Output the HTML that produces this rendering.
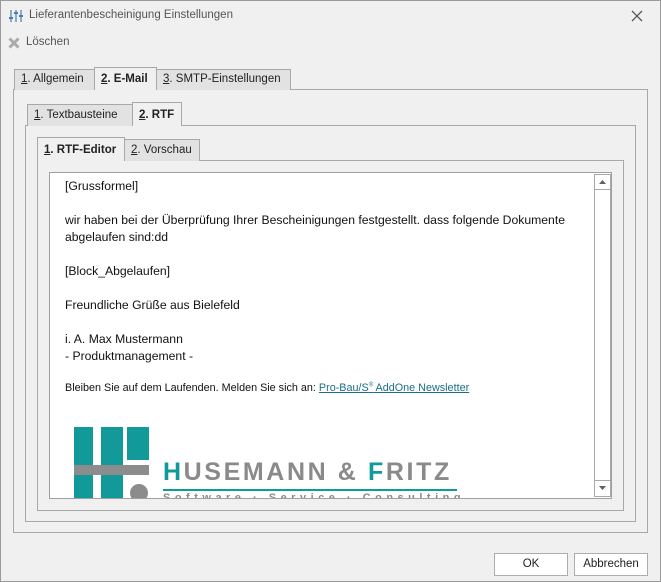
<!DOCTYPE html>
<html><head><meta charset="utf-8"><style>
*{box-sizing:border-box;margin:0;padding:0}
body{width:661px;height:582px;background:#f0f0f0;font-family:"Liberation Sans",sans-serif;font-size:11.5px;color:#222;position:relative;overflow:hidden}
.win{position:absolute;left:0;top:0;width:661px;height:582px;border:1px solid #9a9a9a}
.a{position:absolute}
.tab{position:absolute;border:1px solid #a8a8a8;border-bottom:none;background:#e2e2e2;padding-left:6px;line-height:19px}
.tab.act{background:#f0f0f0;font-weight:bold;z-index:2}
.pan{position:absolute;border:1px solid #a8a8a8;background:#f0f0f0}
u{text-decoration:underline}
.ed{position:absolute;left:49px;top:172px;width:563px;height:327px;border:1px solid #a0a0a0;background:#fff;overflow:hidden}
.txt{position:absolute;left:15px;font-size:12.2px;color:#111;white-space:nowrap}
.btn{position:absolute;border:1px solid #adadad;background:#fff;text-align:center;line-height:21px;font-size:11.5px}
</style></head><body>
<div class="win"></div>
<svg class="a" style="left:9px;top:9px" width="14" height="14" viewBox="0 0 14 14"><g stroke="#4a7bb7" stroke-width="1.2"><line x1="2" y1="1" x2="2" y2="13"/><line x1="7" y1="1" x2="7" y2="13"/><line x1="12" y1="1" x2="12" y2="13"/></g><g fill="#4a7bb7"><rect x="0" y="8" width="4" height="2"/><rect x="5" y="3" width="4" height="2"/><rect x="10" y="6" width="4" height="2"/></g></svg>
<div class="a" style="left:29px;top:9px;color:#555">Lieferantenbescheinigung Einstellungen</div>
<svg class="a" style="left:631px;top:10px" width="12" height="12"><path d="M1 1L11 11M11 1L1 11" stroke="#555" stroke-width="1.3"/></svg>
<svg class="a" style="left:8px;top:37px" width="12" height="12"><path d="M1.5 1.5L10.5 10.5M10.5 1.5L1.5 10.5" stroke="#aaa" stroke-width="3"/></svg>
<div class="a" style="left:26px;top:36px;color:#555">Löschen</div>

<div class="pan" style="left:13px;top:89px;width:635px;height:444px"></div>
<div class="tab" style="left:14px;top:69px;width:81px;height:21px"><u>1</u>. Allgemein</div>
<div class="tab act" style="left:94px;top:67px;width:63px;height:23px;line-height:22px"><u>2</u>. E-Mail</div>
<div class="tab" style="left:156px;top:69px;width:135px;height:21px"><u>3</u>. SMTP-Einstellungen</div>

<div class="pan" style="left:25px;top:125px;width:611px;height:397px"></div>
<div class="tab" style="left:27px;top:104px;width:106px;height:22px;line-height:21px"><u>1</u>. Textbausteine</div>
<div class="tab act" style="left:132px;top:102px;width:50px;height:24px;line-height:24px"><u>2</u>. RTF</div>

<div class="pan" style="left:37px;top:160px;width:587px;height:351px"></div>
<div class="tab act" style="left:37px;top:137px;width:88px;height:24px;line-height:24px"><u>1</u>. RTF-Editor</div>
<div class="tab" style="left:124px;top:139px;width:76px;height:22px;line-height:21px"><u>2</u>. Vorschau</div>

<div class="ed">
<div class="txt" style="top:6px">[Grussformel]</div>
<div class="txt" style="top:40px">wir haben bei der Überprüfung Ihrer Bescheinigungen festgestellt. dass folgende Dokumente</div>
<div class="txt" style="top:57px">abgelaufen sind:dd</div>
<div class="txt" style="top:91px">[Block_Abgelaufen]</div>
<div class="txt" style="top:125px">Freundliche Grüße aus Bielefeld</div>
<div class="txt" style="top:159px">i. A. Max Mustermann</div>
<div class="txt" style="top:176px">- Produktmanagement -</div>
<div class="txt" style="top:209px;font-size:10.8px">Bleiben Sie auf dem Laufenden. Melden Sie sich an: <span style="color:#1a6e8a;text-decoration:underline">Pro-Bau/S<sup style="font-size:6px">®</sup> AddOne Newsletter</span></div>
<div class="a" style="left:24px;top:254px;width:19px;height:80px;background:#12999a"></div>
<div class="a" style="left:51px;top:254px;width:22px;height:80px;background:#12999a"></div>
<div class="a" style="left:77px;top:254px;width:22px;height:33px;background:#12999a"></div>
<div class="a" style="left:24px;top:292px;width:75px;height:10px;background:#8c8c8c"></div>
<div class="a" style="left:80px;top:311px;width:18px;height:18px;border-radius:50%;background:#8c8c8c"></div>
<div class="a" style="left:113px;top:285px;font-size:25px;font-weight:bold;color:#8a8a8a;letter-spacing:2.6px;white-space:nowrap"><span style="color:#12999a">H</span>USEMANN &amp; <span style="color:#12999a">F</span>RITZ</div>
<div class="a" style="left:113px;top:316px;width:294px;height:2px;background:#12999a"></div>
<div class="a" style="left:113px;top:319px;font-size:11px;font-weight:bold;color:#8a8a8a;letter-spacing:4.5px;white-space:nowrap">Software · Service · Consulting</div>
<div class="a" style="left:544px;top:1px;width:17px;height:323px;border:1px solid #a8a8a8;background:#fff"></div>
<div class="a" style="left:545px;top:2px;width:15px;height:15px;border-bottom:1px solid #a8a8a8;background:#fff"></div>
<svg class="a" style="left:549px;top:7px" width="7" height="4"><path d="M0 4L3.5 0L7 4Z" fill="#606060"/></svg>
<div class="a" style="left:545px;top:307px;width:15px;height:16px;border-top:1px solid #a8a8a8;background:#fff"></div>
<svg class="a" style="left:549px;top:313px" width="7" height="4"><path d="M0 0L3.5 4L7 0Z" fill="#606060"/></svg>
</div>

<div class="btn" style="left:494px;top:553px;width:74px;height:23px">OK</div>
<div class="btn" style="left:574px;top:553px;width:74px;height:23px">Abbrechen</div>
</body></html>
